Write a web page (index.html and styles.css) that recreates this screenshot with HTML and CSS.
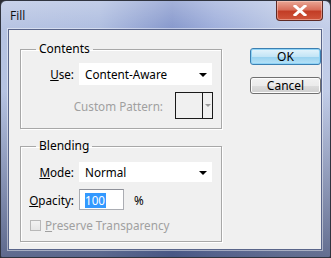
FILE: index.html
```html
<!DOCTYPE html>
<html>
<head>
<meta charset="utf-8">
<link rel="stylesheet" href="styles.css">
</head>
<body>
<div class="window">
  <div class="titlebar">
    <span class="title">Fill</span>
    <div class="close">
      <svg width="14" height="11" viewBox="0 0 14 11"><path d="M2 1 L12 10 M12 1 L2 10" stroke="#fff" stroke-width="3" stroke-linecap="square"/></svg>
    </div>
  </div>
  <div class="client">
    <div class="groups">
      <fieldset class="group contents">
        <legend>Contents</legend>
        <div class="row">
          <label class="lbl"><u>U</u>se:</label>
          <div class="select"><span>Content-Aware</span><i class="arrow"></i></div>
        </div>
        <div class="row pattern">
          <label class="lbl disabled">Custom Pattern:</label>
          <div class="patbox"><div class="swatch"></div><div class="patarrow"><i class="garrow"></i></div></div>
        </div>
      </fieldset>
      <fieldset class="group blending">
        <legend>Blending</legend>
        <div class="row">
          <label class="lbl"><u>M</u>ode:</label>
          <div class="select short"><span>Normal</span><i class="arrow"></i></div>
        </div>
        <div class="row op">
          <label class="lbl"><u>O</u>pacity:</label>
          <div class="input"><span class="sel">100</span></div>
          <span class="pct">%</span>
        </div>
        <div class="row check">
          <span class="box"></span>
          <span class="disabled"><u>P</u>reserve Transparency</span>
        </div>
      </fieldset>
    </div>
    <div class="buttons">
      <div class="btn ok">OK</div>
      <div class="btn cancel">Cancel</div>
    </div>
  </div>
</div>
</body>
</html>
```

FILE: styles.css
```css
html, body { margin: 0; padding: 0; }
body {
  width: 331px; height: 258px; overflow: hidden;
  background: #2a2c33;
  font-family: "Noto Sans", "Open Sans", sans-serif;
  font-size: 11.7px;
  color: #000;
}
.window {
  width: 331px; height: 258px; box-sizing: border-box;
  border: 1px solid #30343f;
  border-radius: 6px 6px 2px 2px;
  background:
    linear-gradient(to bottom, rgba(255,255,255,0.25) 0, rgba(255,255,255,0) 30px, rgba(0,0,0,0) 90px, rgba(20,30,70,0.55) 258px),
    linear-gradient(to right, #b6c3e2 0%, #aebde0 30%, #8597cc 52%, #9eaedb 65%, #b9c6e4 85%, #c2cde8 100%);
  display: flex; flex-direction: column;
  padding: 0 8px 7px 7px;
}
.titlebar {
  height: 28px; flex: none;
  display: flex; justify-content: space-between; align-items: flex-start;
}
.title {
  margin: 8px 0 0 2px; font-size: 12px; line-height: 14px; color: #111;
  font-family: "Open Sans", "Noto Sans", sans-serif;
}
.close {
  width: 47px; height: 20px; box-sizing: border-box;
  margin-right: -1px;
  border: 1px solid #5e2a24; border-top: none;
  border-radius: 0 0 4px 4px;
  background: linear-gradient(to bottom, #e9a796 0%, #d8705c 45%, #c33d26 55%, #d0553b 100%);
  display: flex; align-items: center; justify-content: center;
  box-shadow: inset 0 0 0 1px rgba(255,220,210,0.45);
}
.client {
  flex: 1;
  background: #f0f0f0;
  border: 1px solid #59658a;
  box-shadow: 0 0 0 1px rgba(255,255,255,0.45);
  display: flex;
}
.groups { width: 213px; padding-left: 11px; }
.group {
  margin: 11px 0 0 0; padding: 0 8px 0 0;
  border: 1px solid #a8a8a8;
  box-shadow: inset 1px 1px 0 #fff, 1px 1px 0 #fff;
  width: 202px; box-sizing: border-box;
}
.group legend {
  margin-left: 15px; padding: 0 3px;
  line-height: 16px; height: 16px; font-size: 12px;
}
.blending { margin-top: 9px; }
.row { display: flex; align-items: center; }
.lbl { width: 53px; text-align: right; margin-right: 5px; flex: none; line-height: 16px; }
.contents .row:first-of-type { margin-top: 6px; }
.select {
  width: 133px; height: 22px; box-sizing: border-box;
  background: #fff;
  display: flex; align-items: center; justify-content: space-between;
  padding: 0 5px 0 6px;
}
.select.short { height: 20px; }
.arrow {
  width: 0; height: 0;
  border-left: 4px solid transparent; border-right: 4px solid transparent;
  border-top: 4px solid #000;
  margin-top: 1px;
}
.pattern { justify-content: flex-end; margin-top: 7px; margin-bottom: 9px; }
.pattern .lbl { width: auto; margin-right: 12px; }
.disabled { color: #a0a0a0; }
.patbox {
  width: 38px; height: 27px; box-sizing: border-box;
  border: 1px solid #1a1a1a;
  display: flex; background: #f0f0f0;
}
.swatch { width: 26px; border-right: 1px solid #1a1a1a; }
.patarrow { flex: 1; display: flex; align-items: center; justify-content: center; }
.garrow {
  width: 0; height: 0;
  border-left: 3px solid transparent; border-right: 3px solid transparent;
  border-top: 3px solid #9a9a9a;
}
.blending .row:first-of-type { margin-top: 8px; }
.op { margin-top: 7px; }
.input {
  width: 45px; height: 21px; box-sizing: border-box;
  border: 1px solid #abadb3; border-top-color: #8e9099;
  background: #fff;
  padding: 2px 0 0 5px;
}
.sel { background: #3399ff; color: #fff; line-height: 15px; display: inline-block; padding: 0 1px 0 0; }
.pct { margin-left: 10px; }
.check { margin: 7px 0 8px 9px; }
.box {
  width: 11px; height: 11px; box-sizing: border-box;
  border: 1px solid #b8b8b8;
  background: linear-gradient(#f2f2f2, #e6e6e6);
  margin-right: 4px;
}
.buttons {
  padding: 18px 0 0 17px;
  display: flex; flex-direction: column; gap: 12px;
}
.btn {
  width: 71px; height: 17px; box-sizing: border-box;
  border-radius: 3px;
  display: flex; align-items: center; justify-content: center;
  font-size: 12px; line-height: 14px;
}
.ok {
  border: 1px solid #3c7fb1;
  background: linear-gradient(to bottom, #e5f4fc 0%, #c4e5f6 50%, #98d1ef 51%, #b7e2f7 100%);
  box-shadow: inset 0 0 0 1px #8fd3f6;
}
.cancel {
  border: 1px solid #707070;
  background: linear-gradient(to bottom, #f2f2f2 0%, #ebebeb 50%, #dddddd 51%, #cfcfcf 100%);
  box-shadow: inset 0 0 0 1px #fcfcfc;
}
```
